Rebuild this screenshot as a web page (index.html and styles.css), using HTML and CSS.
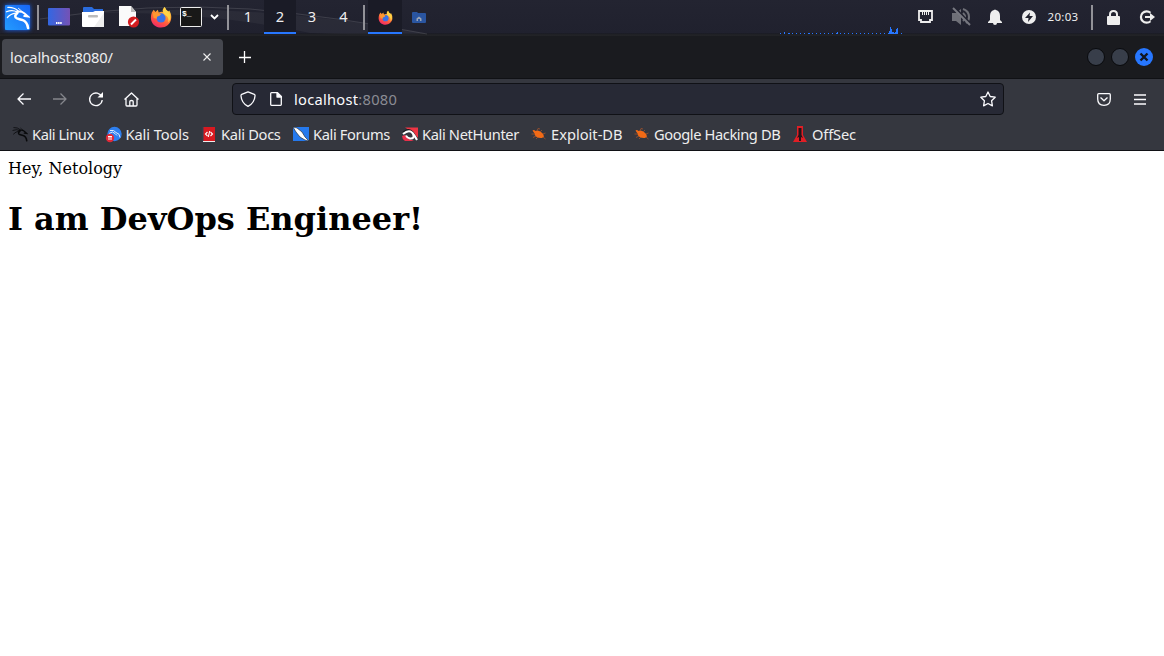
FILE: index.html
```
<!DOCTYPE html>
<html lang="en">
<head>
<meta charset="utf-8">
<title>localhost:8080/</title>
<link rel="stylesheet" href="styles.css">
</head>
<body>
<svg width="0" height="0" class="defs">
  <defs>
    <linearGradient id="kali" x1="0" y1="1" x2="1" y2="0"><stop offset="0" stop-color="#249cff"/><stop offset="1" stop-color="#1765f5"/></linearGradient>
    <linearGradient id="desk" x1="0" y1="0" x2="1" y2="0"><stop offset="0" stop-color="#3267e3"/><stop offset="1" stop-color="#7552b5"/></linearGradient>
    <linearGradient id="fire" x1=".8" y1="0" x2=".3" y2="1"><stop offset="0" stop-color="#ffe14a"/><stop offset=".4" stop-color="#ff9830"/><stop offset=".7" stop-color="#ff5540"/><stop offset="1" stop-color="#f0286b"/></linearGradient>
    <symbol id="dragon" viewBox="0 0 26 26">
      <g fill="none" stroke="currentColor" stroke-linecap="round">
        <path stroke-width="1.300" d="M3 2.500Q9 2 13.500 6M1.500 7Q8 4.500 13 7.500M2.500 13Q6 9 11 8.500"/>
        <path stroke-width="2" d="M12 7Q17 6 20 8.500L24 12L20 11.500"/>
        <path stroke-width="2.600" d="M13 8Q8.500 12 12.500 14Q15 15 18 15.500Q23 17 24 24"/>
        <path stroke-width="1" d="M14 3.500L18 7"/>
      </g>
    </symbol>
    <symbol id="fox" viewBox="0 0 24 24">
      <path fill="url(#fire)" d="M2 7L4 4L6 6.500L8.500 4L9.500 7Q12 6 14 6.500Q13 3.500 16 1Q17 4 20 6L21 5Q24 10 23 14.500C22 20 17.500 23.500 12 23.500C6 23.500 1 19 1 13Q1 9.500 2 7Z"/>
      <circle cx="12" cy="13" r="5" fill="#3972e6"/>
      <path fill="#ff9830" d="M3 8Q8 6 12 9L10 11Q7 11 7.500 14L4 13Z"/>
      <path fill="#ffd347" d="M16 1Q17 4 21 7Q24 13 20 18Q21 12 17 10Q12 7 16 1Z"/>
    </symbol>
    <symbol id="bug" viewBox="0 0 16 16">
      <path fill="#f26a16" d="M1.500 4.500Q3 3.500 4.500 5Q7 3.500 10 6Q13 8 13 10.500L11 12Q6 12.500 4 9.500L3.500 7.500Z"/>
      <path fill="none" stroke="#a4532b" stroke-width=".8" d="M.5 8H4M5 10L2 11.500M7 11L5 13M6 5L7 2.500L9 3M9 6L11 4M12 8L14.500 7M12 11L14.500 13"/>
    </symbol>
  </defs>
</svg>

<header class="panel">
  <svg class="arc" width="440" height="36"><path d="M40 19Q220-5 427 34Q350 35 310 33Q200 10 90 13Z" fill="#fff" opacity=".045"/><path d="M40 19Q150 2 250 9Q340 17 427 34" fill="none" stroke="#fff" opacity=".13"/></svg>
  <div class="cell w34"><svg class="kali" width="25" height="25" viewBox="0 0 26 26"><rect width="26" height="26" rx="1" fill="url(#kali)"/><use href="#dragon"/></svg></div>
  <div class="cell w8"><i class="sep"></i></div>
  <div class="cell w34"><svg width="22" height="18"><rect width="22" height="17.500" rx="1" fill="url(#desk)"/><path d="M8 15H14" stroke="#fff" stroke-width="2" stroke-dasharray="1.500 .6"/></svg></div>
  <div class="cell w34"><svg width="22" height="20"><path d="M1 6V1Q1 0 2 0H10L12 2H21V8H1Z" fill="#2a6cdd"/><path d="M0 5H11L13 4H22V19Q22 20 21 20H1Q0 20 0 19Z" fill="#fff"/><path d="M22 6V20H12Z" fill="#eee"/><rect x="6" y="8" width="10" height="2.500" rx="1" fill="#bbb"/></svg></div>
  <div class="cell w34 doc"><svg width="20" height="22"><path d="M0 0H12L17 6V20H0Z" fill="#fafafa"/><path d="M12 0V6H17Z" fill="#bbb"/><circle cx="14.500" cy="16" r="5.600" fill="#d41d20"/><path d="M12 18.500L17 13.500" stroke="#fff" stroke-width="2"/></svg></div>
  <div class="cell w34"><svg width="22" height="22"><use href="#fox"/></svg></div>
  <div class="cell w26"><svg width="22" height="20"><rect x=".5" y=".5" width="21" height="19" rx="1" fill="#181818" stroke="#eee"/><text x="2" y="9" class="term">$_</text></svg></div>
  <div class="cell w20"><svg width="9" height="6"><path d="M1 1L4.500 4.500L8 1" fill="none" stroke="#fff" stroke-width="1.800"/></svg></div>
  <div class="cell w8"><i class="sep"></i></div>
  <div class="cell w32 num">1</div>
  <div class="cell w32 active num">2</div>
  <div class="cell w32 num">3</div>
  <div class="cell w31 num">4</div>
  <div class="cell w9"><i class="sep"></i></div>
  <div class="cell w34 active"><svg width="15" height="15"><use href="#fox"/></svg></div>
  <div class="cell w34"><svg width="14" height="11"><path d="M0 1Q0 0 1 0H5L6 1H13Q14 1 14 2V10Q14 11 13 11H1Q0 11 0 10Z" fill="#2a55a0"/><path d="M4.500 9V6.500L7 4.500L9.500 6.500V9H8V7H6V9Z" fill="#9aa4b5"/></svg></div>
  <div class="tray">
    <svg class="graph" width="124" height="36"><path d="M1 33.500H112" stroke="#2777ff" stroke-dasharray="1 3"/><path d="M5 32H6V34H5ZM58 32H59V34H58ZM9 33H11V34H9ZM29 33H31V34H29ZM110 34V31H111V27H112V29H113V32H115V33H116V32H117V29H118V28H119V34ZM122 33H123V34H122Z" fill="#2777ff"/></svg>
    <div class="cell w34 net"><svg width="15" height="14"><path d="M1 1H14V10H12V12H3V10H1Z" fill="none" stroke="#eee" stroke-width="1.800"/><path d="M4.500 2V5M6.500 2V5M8.500 2V5M10.500 2V5" stroke="#eee"/></svg></div>
    <div class="cell w34"><svg width="19" height="18"><path d="M0 5H4L9 1V17L4 13H0Z" fill="#6f7078"/><path d="M11 1Q17 3 17 9Q17 13 14 15M11 5Q15 9 11 13" fill="none" stroke="#6f7078" stroke-width="2"/><path d="M3 0L19 16" stroke="#222330" stroke-width="2"/><path d="M1 0L18 17" stroke="#777880" stroke-width="2"/></svg></div>
    <div class="cell w34"><svg width="14" height="16"><path d="M6 1Q7 0 8 1Q12 2 12 7V11L14 13V14H0V13L2 11V7Q2 2 6 1ZM5 14H9Q9 16 7 16Q5 16 5 14Z" fill="#eee"/></svg></div>
    <div class="cell w34"><svg width="14" height="14"><circle cx="7" cy="7" r="7" fill="#eee"/><path d="M8 2.500L3 8H6.500L6 12L11 6H7.500Z" fill="#20212d"/></svg></div>
    <div class="cell w34 clock">20:03</div>
    <div class="cell w24"><i class="sep"></i></div>
    <div class="cell w18"><svg width="13" height="15"><path d="M3 7V4.500Q3 1 6.500 1Q10 1 10 4.500V7" fill="none" stroke="#eee" stroke-width="2"/><rect y="6" width="13" height="9" rx="1" fill="#eee"/></svg></div>
    <div class="cell w34 exit"><svg width="15" height="14"><path d="M10.500 2.800A5.700 5.700 0 1 0 10.500 11.200" fill="none" stroke="#eee" stroke-width="2.200"/><path d="M5 6H10V3L15 7L10 11V8H5Z" fill="#eee"/></svg></div>
  </div>
</header>

<div class="tabs">
  <div class="tab"><span>localhost:8080/</span><svg width="8" height="8"><path d="M.5.5L7.500 7.500M7.500.5L.5 7.500" stroke="#eee" stroke-width="1.100"/></svg></div>
  <svg class="plus" width="12" height="12"><path d="M5.500 0V12M0 6.500H12" stroke="#fff" stroke-width="1.300"/></svg>
  <div class="controls"><i class="dot"></i><i class="dot"></i><svg width="18" height="18"><circle cx="9" cy="9" r="9" fill="#2777ff"/><path d="M5.500 5.500L12.500 12.500M12.500 5.500L5.500 12.500" stroke="#111722" stroke-width="2.400"/></svg></div>
</div>

<div class="nav">
  <div class="cell w36"><svg width="14" height="12" class="line"><path d="M14 6H1M6.500.5L1 6L6.500 11.500"/></svg></div>
  <div class="cell w36"><svg width="14" height="12" class="line dim"><path d="M0 6H13M7.500.5L13 6L7.500 11.500"/></svg></div>
  <div class="cell w36"><svg width="14" height="14" class="line"><path d="M12.800 5A6.300 6.300 0 1 0 13.200 8"/><path d="M14 0V5.500H8.500Z" fill="#fff" stroke="none"/></svg></div>
  <div class="cell w35"><svg width="15" height="15" class="line"><path d="M.5 7.500L7.500 1L14.500 7.500M2 6.500V13Q2 14 3 14H12Q13 14 13 13V6.500M5.800 14V9.500Q5.800 8.500 7.500 8.500Q9.200 8.500 9.200 9.500V14"/></svg></div>
  <div class="url">
    <svg width="16" height="16" class="line"><path d="M8 .8L14.300 3.300Q15.200 3.800 15 5Q14.500 12 8 15.400Q1.500 12 1 5Q.8 3.800 1.700 3.300Z"/></svg>
    <svg width="12" height="14" class="line page-icon"><path d="M1.500.7H7.500L11.300 4.500V12.500Q11.300 13.300 10.500 13.300H1.500Q.7 13.300.7 12.500V1.500Q.7.7 1.500.7Z"/><path d="M7 .7V5H11.500Z" fill="#fff"/></svg>
    <span class="address">localhost<em>:8080</em></span>
    <svg width="16" height="16" class="line star"><path d="M8 1L10.200 5.500L15.200 6.200L11.600 9.800L12.400 14.800L8 12.500L3.600 14.800L4.400 9.800L.8 6.200L5.800 5.500Z"/></svg>
  </div>
  <div class="right">
    <svg width="14" height="13" class="line"><path d="M1.700.7H12.300Q13.300.7 13.300 1.700V6Q13.300 12.300 7 12.300Q.7 12.300.7 6V1.700Q.7.7 1.700.7ZM3.500 4.500L7 7.800L10.500 4.500"/></svg>
    <svg width="12" height="11" class="line"><path d="M0 1H12M0 5.500H12M0 10H12"/></svg>
  </div>
</div>

<nav class="bookmarks">
  <a class="b1"><svg width="16" height="16" class="black"><use href="#dragon"/></svg>Kali Linux</a>
  <a class="b2"><svg width="16" height="16"><circle cx="8.500" cy="8" r="7.200" fill="#2e7fef"/><path d="M4 4.500Q8 3.500 10 6.500Q14 7.500 14 11.500M3 7.500Q7 4.500 9 7.500L11 9.500" stroke="#dcecff" fill="none" stroke-width="1"/><circle cx="4" cy="12" r="4.200" fill="#e12937"/><path d="M2 10.500H6M3 10.500V14M5 10.500V14" stroke="#fff"/></svg>Kali Tools</a>
  <a class="b3"><svg width="16" height="16"><rect x="2" y="1" width="12" height="15" fill="#d71920"/><path d="M2 1V16" stroke="#345" stroke-width="1"/><path d="M2 15.500H14" stroke="#eee"/><path d="M6.500 6L4.500 8L6.500 10M9.500 6L11.500 8L9.500 10M8.700 5L7.300 11" stroke="#fff" fill="none" stroke-width="1.100"/></svg>Kali Docs</a>
  <a class="b4"><svg width="16" height="16"><rect y="1" width="16" height="14" fill="#2579ed"/><path d="M0 1L4 2L9 6L12 11L16 15L12 14L7 11L3 6Z" fill="#fff" stroke="#222" stroke-width=".6"/></svg>Kali Forums</a>
  <a class="b5"><svg width="16" height="16"><path d="M3 1.500H16V12L10 6Z" fill="#ee3544"/><path d="M0 10L3 9L7 13L12 15H3Q0 13 0 10Z" fill="#e8304a"/><path d="M1 6Q7 1 11 6L15 12" stroke="#17181b" fill="none" stroke-width="1.200"/><path d="M1 8Q7 3 10.500 7Q13 10 15 14M11 8Q13 13 8 12.500Q5 12 4 9.500" fill="none" stroke="#fff" stroke-width="2"/></svg>Kali NetHunter</a>
  <a class="b6"><svg width="16" height="16"><use href="#bug"/></svg>Exploit-DB</a>
  <a class="b7"><svg width="16" height="16"><use href="#bug"/></svg>Google Hacking DB</a>
  <a class="b8"><svg width="16" height="16"><path d="M5 0H11V9L15 16H1L5 9Z" fill="#e01e25"/><path d="M6.500 2H9.500V9L11 12L9 11V15H7V11L5 12L6.500 9Z" fill="#241519"/></svg>OffSec</a>
</nav>

<main class="page">Hey, Netology
<h1>I am DevOps Engineer!</h1>
</main>
</body>
</html>
```
FILE: styles.css
```
* { box-sizing: border-box; }
body { margin: 0; width: 1164px; height: 656px; overflow: hidden; background: #fff; font: 14.67px "Noto Sans", sans-serif; color: #eee; }
svg { display: block; flex: none; overflow: visible; }
.defs { position: absolute; }
.panel { position: relative; display: flex; height: 36px; background: linear-gradient(#232431, #20212e 33px, #17181d 34px, #292a2e 35px, #1a1b1f 36px); }
.arc { position: absolute; left: 0; top: 0; overflow: hidden; }
.cell { display: flex; flex: none; height: 34px; align-items: center; justify-content: center; position: relative; }
.w8 { width: 8px; } .w9 { width: 9px; } .w18 { width: 18px; } .w20 { width: 20px; }
.w24 { width: 24px; } .w26 { width: 26px; } .w31 { width: 31px; } .w32 { width: 32px; }
.w34 { width: 34px; } .w35 { width: 35px; } .w36 { width: 36px; }
.kali { color: #fff; filter: drop-shadow(0 0 2px #1767ff); }
.doc { padding-left: 3px; }
.sep { width: 2px; height: 25px; background: #929298; }
.active { background: #1a1b26; border-bottom: 2px solid #2777ff; padding-top: 2px; }
.num { padding-bottom: 2px; }
.num.active { padding: 0; }
.term { font: bold 8px "Liberation Mono", monospace; fill: #fff; }
.tray { display: flex; margin-left: auto; }
.net { margin-left: 7px; }
.net svg { margin-right: 3px; }
.clock { font-size: 11.5px; letter-spacing: .3px; padding-bottom: 2px; }
.exit { margin-left: 8px; width: 34px; padding-left: 1px; }
.tabs { display: flex; align-items: center; height: 43px; background: #1a1b1f; border-bottom: 1px solid #101115; padding-left: 2px; }
.tab { display: flex; align-items: center; justify-content: space-between; width: 221px; height: 36px; padding: 0 12px 0 8px; background: #45474e; border-radius: 4px; letter-spacing: -.13px; }
.plus { margin-left: 16px; }
.controls { display: flex; align-items: center; gap: 6px; margin: 0 11px 0 auto; }
.dot { width: 18px; height: 18px; border-radius: 50%; background: #383e4a; border: 1px solid #090a0d; }
.nav { display: flex; align-items: center; height: 40px; background: #35373f; padding-left: 6px; }
.line { fill: none; stroke: #fbfbfe; stroke-width: 1.3; stroke-linejoin: round; }
.dim { stroke: #85868c; }
.url { display: flex; align-items: center; width: 772px; height: 32px; margin-left: 83px; padding: 0 7px; background: #272935; border: 1px solid #101116; border-radius: 4px; }
.page-icon { margin-left: 14px; }
.address { margin-left: 12px; color: #fbfbfe; letter-spacing: .27px; }
.address em { font-style: normal; color: #8b8c94; }
.star { margin-left: auto; }
.right { display: flex; align-items: center; gap: 23px; margin: 0 18px 0 auto; }
.bookmarks { display: flex; align-items: center; height: 32px; background: #35373f; border-bottom: 1px solid #101115; padding: 0 0 2px 12px; white-space: nowrap; }
.bookmarks a { display: flex; flex: none; align-items: center; gap: 4px; }
.b1 { width: 93.5px; letter-spacing: -.42px; }
.b2 { width: 95.5px; letter-spacing: -.1px; }
.b3 { width: 92px; letter-spacing: -.3px; }
.b4 { width: 109px; letter-spacing: -.36px; }
.b5 { width: 129px; letter-spacing: -.36px; }
.b6 { width: 103px; }
.b7 { width: 158px; letter-spacing: -.4px; }
.b8 { letter-spacing: -.15px; }
.black { color: #08090b; }
.page { padding: 8px; color: #000; font: 16px "DejaVu Serif", serif; }
h1 { font-size: 32px; line-height: normal; margin: 22px 0; }
```
